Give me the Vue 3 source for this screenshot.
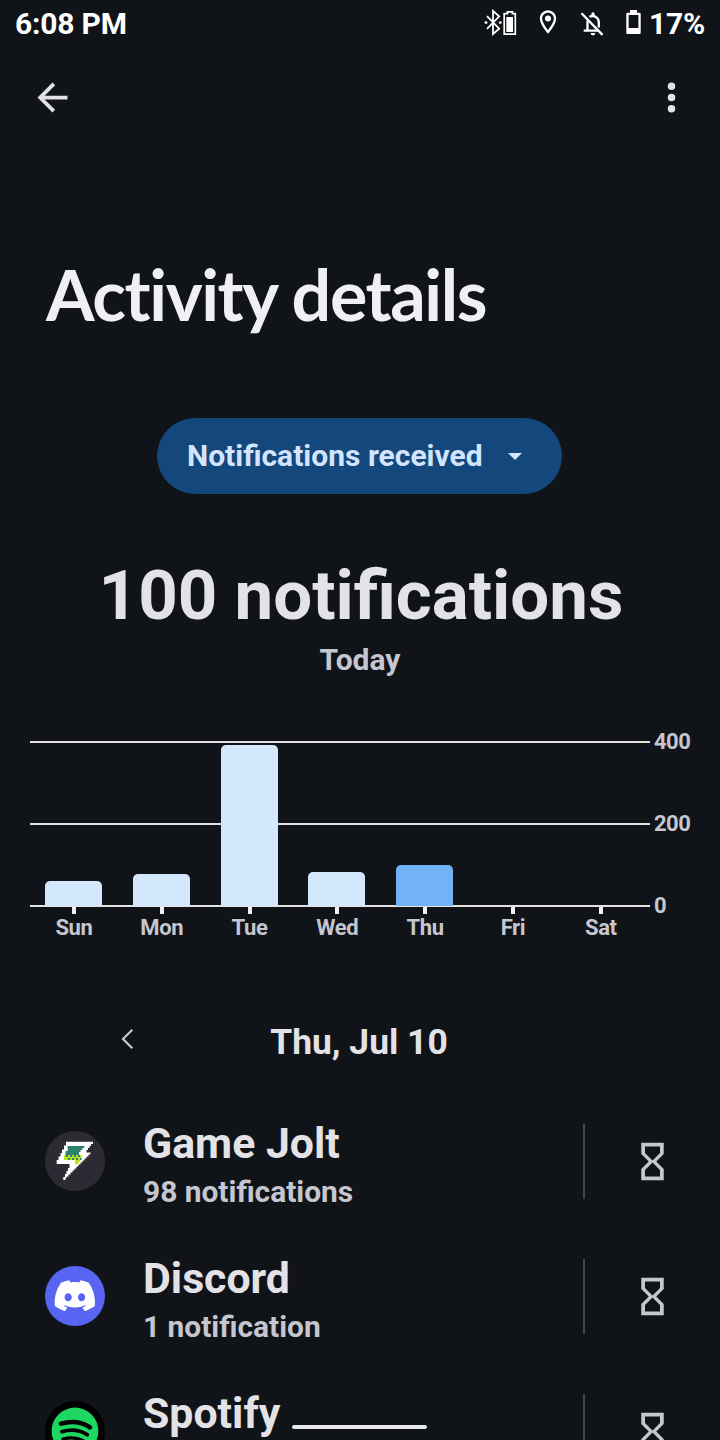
<template>
  <div class="screen">
    <header class="status-bar">
      <span class="clock">6:08 PM</span>
      <div class="status-icons">
        <svg class="bt" width="34" height="28" viewBox="0 0 34 28">
          <path d="M3 8.200l12.200 12.500L9 26V3l6.200 5.300L3 20.800" fill="none" stroke="#fff" stroke-width="1.800" />
          <circle cx="2" cy="14.600" r="1.400" fill="#fff" />
          <circle cx="16.300" cy="14.600" r="1.400" fill="#fff" />
          <path d="M20.200 5.600h3.200V3.800h5v1.800h2.900v20.600H20.200z" fill="none" stroke="#fff" stroke-width="1.700" />
          <path d="M22.300 9h6.700v15h-6.700z" fill="#fff" />
        </svg>
        <svg class="pin" width="28" height="28" viewBox="0 0 24 24" fill="#fff">
          <path d="M12 2C8.130 2 5 5.130 5 9c0 5.250 7 13 7 13s7-7.750 7-13c0-3.870-3.130-7-7-7zM7 9c0-2.760 2.240-5 5-5s5 2.240 5 5c0 2.880-2.880 7.190-5 9.880C9.920 16.210 7 11.850 7 9z" />
          <circle cx="12" cy="9" r="2.600" />
        </svg>
        <svg class="bell" width="24" height="26" viewBox="0 0 24 26" fill="none" stroke="#fff" stroke-width="2.300">
          <path d="M1.500 2.300l21 21.600" />
          <path d="M9.400 5.800c4.700-2.200 9.400.600 9.400 5.600v5.200M7.500 9.500V19.700M3.700 19.700h14.500" />
          <path d="M11.400 4.600V2.800a1.600 1.600 0 0 1 3.200 0v1.800z" fill="#fff" stroke="none" />
          <path d="M10.600 22h4.800a2.400 2.400 0 0 1-4.800 0z" fill="#fff" stroke="none" />
        </svg>
        <svg class="battery" width="15" height="24" viewBox="0 0 15 24">
          <path fill="#fff" fill-rule="evenodd" d="M4 0h7v2.700h2.700q1 0 1 1V23q0 1-1 1H1.300q-1 0-1-1V3.700q0-1 1-1H4zM2.600 5v13h9.800V5z" />
        </svg>
        <span class="percent">17%</span>
      </div>
    </header>

    <nav class="app-bar">
      <svg width="45" height="45" viewBox="0 0 24 24" fill="#e3e2e6">
        <path d="M20 11H7.830l5.590-5.590L12 4l-8 8 8 8 1.410-1.410L7.830 13H20v-2z" />
      </svg>
      <svg width="45" height="45" viewBox="0 0 24 24" fill="#e3e2e6">
        <circle cx="12" cy="6" r="2" />
        <circle cx="12" cy="12" r="2" />
        <circle cx="12" cy="18" r="2" />
      </svg>
    </nav>

    <h1 class="title">Activity details</h1>

    <button class="filter">
      <span>Notifications received</span>
      <svg width="14" height="7" viewBox="0 0 14 7"><path d="M0 0h14L7 7z" fill="#d3e4ff" /></svg>
    </button>

    <div class="total">100 notifications</div>
    <div class="period">Today</div>

    <div class="chart">
      <div class="plot">
        <div v-for="value in scale" :key="value" class="grid-line">
          <span>{{ value }}</span>
        </div>
        <div class="bars">
          <div v-for="day in days" :key="day.name" class="slot">
            <div class="bar" :class="{ selected: day.name === selectedDay }" :style="{ height: day.count * 0.41 + 'px' }"></div>
          </div>
        </div>
      </div>
      <div class="labels">
        <span v-for="day in days" :key="day.name">{{ day.name }}</span>
      </div>
    </div>

    <div class="date-row">
      <svg class="prev" width="14" height="22" viewBox="0 0 14 22">
        <path d="M12.300 1.700L3 11l9.300 9.300" fill="none" stroke="#c5c6d0" stroke-width="2.200" />
      </svg>
      <span>Thu, Jul 10</span>
    </div>

    <ul class="apps">
      <li v-for="app in apps" :key="app.name" class="app">
        <svg v-if="app.icon === 'gamejolt'" class="app-icon" width="60" height="60" viewBox="0 0 60 60">
          <circle cx="30" cy="30" r="30" fill="#2d2a33" />
          <path fill="#fff" d="M21 10.700H48V13H46V15H44.500V17H43V19H41.500V21.500H45.500V23.500H43.500V25.500H41.500V27.500H39.500V29.500H37.500V31.500H35.500V33.500H33.500V35.500H31.500V37.500H29.500V39.500H27.500V41.500H25.500V43.500H23.500V45.500H21.500V47H20.500V49H18.300V46H20V43H21.500V40H23V37H24.500V33H11.700V29H13.500V25.500H15.500V22H17V18.500H19V14.500H21z" />
          <path fill="#2f7f6f" d="M22.700 15H39.300V17H37.300V19H35.500V21H34V24H20.500V20H22.700z" />
          <path fill="#b6e61c" d="M19 24H36.500V29H35.300V31H33.500V33H30V29H19z" />
          <path fill="#2f7f6f" d="M21 24h2v2h-2zM25 24h2v2h-2zM29 24h2v2h-2zM33 24h2v2h-2zM23 27h2v2h-2zM27 27h2v2h-2zM31 27h2v2h-2zM35 27h1.500v2h-1.500z" />
        </svg>
        <svg v-else-if="app.icon === 'discord'" class="app-icon" width="60" height="60" viewBox="0 0 60 60">
          <circle cx="30" cy="30" r="30" fill="#5865f2" />
          <path transform="translate(9.700 9.500) scale(1.680)" fill="#fff" d="M20.317 4.3698a19.7913 19.7913 0 00-4.8851-1.5152.0741.0741 0 00-.0785.0371c-.211.3753-.4447.8648-.6083 1.2495-1.8447-.2762-3.68-.2762-5.4868 0-.1636-.3933-.4058-.8742-.6177-1.2495a.077.077 0 00-.0785-.037 19.7363 19.7363 0 00-4.8852 1.515.0699.0699 0 00-.0321.0277C.5334 9.0458-.319 13.5799.0992 18.0578a.0824.0824 0 00.0312.0561c2.0528 1.5076 4.0413 2.4228 5.9929 3.0294a.0777.0777 0 00.0842-.0276c.4616-.6304.8731-1.2952 1.226-1.9942a.076.076 0 00-.0416-.1057c-.6528-.2476-1.2743-.5495-1.8722-.8923a.077.077 0 01-.0076-.1277c.1258-.0943.2517-.1923.3718-.2914a.0743.0743 0 01.0776-.0105c3.9278 1.7933 8.18 1.7933 12.0614 0a.0739.0739 0 01.0785.0095c.1202.099.246.1981.3728.2924a.077.077 0 01-.0066.1276 12.2986 12.2986 0 01-1.873.8914.0766.0766 0 00-.0407.1067c.3604.698.7719 1.3628 1.225 1.9932a.076.076 0 00.0842.0286c1.961-.6067 3.9495-1.5219 6.0023-3.0294a.077.077 0 00.0313-.0552c.5004-5.177-.8382-9.6739-3.5485-13.6604a.061.061 0 00-.0312-.0286zM8.02 15.3312c-1.1825 0-2.1569-1.0857-2.1569-2.419 0-1.3332.9555-2.4189 2.157-2.4189 1.2108 0 2.1757 1.0952 2.1568 2.419 0 1.3332-.9555 2.4189-2.1569 2.4189zm7.9748 0c-1.1825 0-2.1569-1.0857-2.1569-2.419 0-1.3332.9554-2.4189 2.1569-2.4189 1.2108 0 2.1757 1.0952 2.1568 2.419 0 1.3332-.946 2.4189-2.1568 2.4189Z" />
        </svg>
        <svg v-else class="app-icon" width="60" height="60" viewBox="0 0 60 60">
          <circle cx="30" cy="30" r="30" fill="#000" />
          <circle cx="30" cy="30" r="23.400" fill="#1ed760" />
          <g fill="none" stroke="#000" stroke-linecap="round">
            <path d="M16 22.600Q32.500 18 45 26.300" stroke-width="4.600" />
            <path d="M17 30.600Q31 26.500 42.200 33.600" stroke-width="3.900" />
            <path d="M18 38Q30 35 39.500 40.500" stroke-width="3.200" />
          </g>
        </svg>
        <div class="app-text">
          <div class="app-name">{{ app.name }}</div>
          <div class="app-count">{{ app.count }}</div>
        </div>
        <div class="timer">
          <svg width="45" height="45" viewBox="0 0 24 24" fill="#c5c6d0">
            <path d="M6 2v6h.010L6 8.010 10 12l-4 4 .010.010H6V22h12v-5.990h-.010L18 16l-4-4 4-3.990-.010-.010H18V2H6zm10 14.500V20H8v-3.500l4-4 4 4zm-4-5l-4-4V4h8v3.500l-4 4z" />
          </svg>
        </div>
      </li>
    </ul>

    <div class="home-handle"></div>
  </div>
</template>

<script setup>
import { ref } from 'vue';

const selectedDay = ref('Thu');

// Y axis, top to bottom
const scale = [400, 200, 0];

const days = [
  { name: 'Sun', count: 61 },
  { name: 'Mon', count: 78 },
  { name: 'Tue', count: 393 },
  { name: 'Wed', count: 83 },
  { name: 'Thu', count: 100 },
  { name: 'Fri', count: 0 },
  { name: 'Sat', count: 0 },
];

const apps = [
  { name: 'Game Jolt', count: '98 notifications', icon: 'gamejolt' },
  { name: 'Discord', count: '1 notification', icon: 'discord' },
  { name: 'Spotify', count: '', icon: 'spotify' },
];
</script>

<style>
body {
  margin: 0;
  background: #101418;
}
</style>

<style scoped>
.screen {
  position: relative;
  display: flex;
  flex-direction: column;
  width: 720px;
  height: 1440px;
  overflow: hidden;
  background: #101418;
  color: #e3e2e6;
  font-family: Roboto, "Liberation Sans", sans-serif;
  font-weight: 700;
}

.screen svg {
  display: block;
  flex: none;
}

.status-bar {
  display: flex;
  flex: none;
  justify-content: space-between;
  height: 48px;
  padding: 0 15px;
  color: #fff;
  font-size: 30px;
  line-height: 47px;
}

.clock,
.percent {
  letter-spacing: -0.2px;
}

.status-icons {
  display: flex;
  align-items: flex-start;
}

.bt {
  margin-top: 8px;
}

.pin {
  margin: 8px 0 0 16px;
}

.bell {
  margin: 11px 0 0 18px;
}

.battery {
  margin: 10px 0 0 22px;
}

.percent {
  margin-left: 8px;
}

.app-bar {
  display: flex;
  flex: none;
  justify-content: space-between;
  height: 45px;
  padding: 27px 26px 0 30px;
}

.title {
  flex: none;
  height: 90px;
  margin: 130px 0 0 46px;
  color: #f1eff6;
  font-family: Lato, "Open Sans", sans-serif;
  font-size: 70px;
  font-weight: 700;
  letter-spacing: -1.4px;
  line-height: 89px;
  white-space: nowrap;
}

.filter {
  display: flex;
  flex: none;
  align-items: center;
  align-self: flex-start;
  width: 405px;
  height: 76px;
  margin: 78px 0 0 157px;
  padding: 0 40px 0 30px;
  justify-content: space-between;
  border: none;
  border-radius: 38px;
  background: #14477b;
  color: #d3e4ff;
  font: inherit;
  font-size: 30px;
}

.filter span {
  padding-bottom: 2px;
}

.total {
  flex: none;
  height: 84px;
  margin-top: 60px;
  padding-left: 2px;
  font-size: 69px;
  line-height: 84px;
  text-align: center;
  white-space: nowrap;
}

.period {
  flex: none;
  height: 36px;
  margin-top: 4px;
  color: #c5c6d0;
  font-size: 30px;
  line-height: 36px;
  text-align: center;
}

.chart {
  flex: none;
  margin: 63px 0 0 30px;
  color: #c5c6d0;
  font-size: 22px;
}

.plot {
  position: relative;
  display: flex;
  flex-direction: column;
  justify-content: space-between;
  width: 620px;
  height: 166px;
}

.grid-line {
  display: flex;
  align-items: center;
  height: 2px;
  background: #e3e2e0;
}

.grid-line span {
  margin-left: 624px;
  padding-bottom: 2px;
  letter-spacing: -0.5px;
}

/* Bars overlay the grid lines */
.bars {
  position: absolute;
  left: 0;
  bottom: 1px;
  display: flex;
  width: 613.5px;
}

.slot {
  display: flex;
  flex: 1;
  align-items: flex-end;
  justify-content: center;
}

.bar {
  width: 57px;
  border-radius: 5px 5px 0 0;
  background: #d3e8fd;
}

.bar.selected {
  background: #72b3f6;
}

.labels {
  display: flex;
  width: 614.7px;
}

.labels span {
  flex: 1;
  letter-spacing: -0.4px;
  line-height: 28px;
  text-align: center;
  text-indent: 2px;
}

.labels span::before {
  content: "";
  display: block;
  width: 4px;
  height: 7px;
  margin: 0 auto;
  background: #f1f0f0;
}

.date-row {
  position: relative;
  display: flex;
  flex: none;
  align-items: center;
  justify-content: center;
  height: 44px;
  margin-top: 78px;
  font-size: 35.4px;
}

.date-row span {
  padding-right: 2px;
}

.prev {
  position: absolute;
  left: 120px;
  top: 8px;
}

.apps {
  flex: none;
  margin: 30px 0 0;
  padding: 0;
  list-style: none;
}

.app {
  display: flex;
  align-items: center;
  box-sizing: border-box;
  height: 135px;
  padding-left: 45px;
}

.app-icon {
  margin-bottom: 2px;
}

.app-text {
  flex: 1;
  margin-left: 38px;
  padding-top: 4px;
}

.app-name {
  font-size: 42.8px;
  line-height: 52px;
}

.app-count {
  min-height: 36px;
  margin-top: 5px;
  color: #c5c6d0;
  font-size: 29.9px;
  line-height: 36px;
}

.timer {
  display: flex;
  align-items: center;
  justify-content: center;
  width: 135px;
  height: 75px;
  border-left: 2px solid #44464b;
}

.home-handle {
  position: absolute;
  left: 292px;
  bottom: 11px;
  width: 135px;
  height: 4px;
  border-radius: 2px;
  background: #e9e9ea;
}
</style>
